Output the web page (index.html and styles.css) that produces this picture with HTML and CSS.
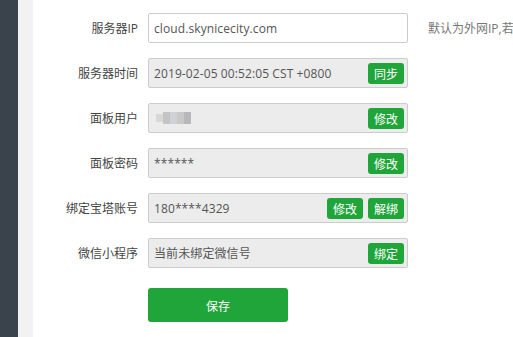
FILE: index.html
```html
<!DOCTYPE html>
<html lang="zh-CN">
<head>
<meta charset="utf-8">
<title>面板设置</title>
<link rel="stylesheet" href="styles.css">
</head>
<body>
<div class="page">
  <aside class="sidebar"></aside>
  <div class="gutter"></div>
  <main class="main">
    <div class="row">
      <span class="label">服务器IP</span>
      <div class="field field-white"><span class="value">cloud.skynicecity.com</span></div>
      <span class="hint">默认为外网IP,若</span>
    </div>
    <div class="row">
      <span class="label">服务器时间</span>
      <div class="field"><span class="value">2019-02-05 00:52:05 CST +0800</span><span class="btns"><button class="btn">同步</button></span></div>
    </div>
    <div class="row">
      <span class="label">面板用户</span>
      <div class="field"><span class="value"><span class="mosaic"><i class="m1"></i><i class="m2"></i><i class="m3"></i><i class="m4"></i><i class="m5"></i></span></span><span class="btns"><button class="btn">修改</button></span></div>
    </div>
    <div class="row">
      <span class="label">面板密码</span>
      <div class="field"><span class="value">******</span><span class="btns"><button class="btn">修改</button></span></div>
    </div>
    <div class="row">
      <span class="label">绑定宝塔账号</span>
      <div class="field"><span class="value">180****4329</span><span class="btns"><button class="btn">修改</button><button class="btn">解绑</button></span></div>
    </div>
    <div class="row">
      <span class="label">微信小程序</span>
      <div class="field"><span class="value">当前未绑定微信号</span><span class="btns"><button class="btn">绑定</button></span></div>
    </div>
    <div class="actions">
      <button class="save">保存</button>
    </div>
  </main>
</div>
</body>
</html>
```
FILE: styles.css
```css
html, body {
  margin: 0;
  padding: 0;
  height: 100%;
  background: #fff;
  font-family: "Open Sans", "Noto Sans CJK SC", sans-serif;
  font-size: 12px;
  color: #555;
  overflow: hidden;
}
.page {
  display: flex;
  height: 100%;
}
.sidebar {
  width: 18px;
  flex: none;
  background: #3a424b;
}
.gutter {
  width: 15px;
  flex: none;
  background: #f2f2f2;
}
.main {
  flex: 1;
  padding-top: 13px;
  white-space: nowrap;
  overflow: hidden;
}
.row {
  display: flex;
  align-items: center;
  height: 30px;
  margin-bottom: 15px;
}
.label {
  width: 105px;
  padding-right: 10px;
  text-align: right;
  flex: none;
  color: #444;
  font-size: 12px;
}
.field {
  box-sizing: border-box;
  width: 260px;
  height: 30px;
  flex: none;
  display: flex;
  align-items: center;
  justify-content: space-between;
  border: 1px solid #ccc;
  border-radius: 2px;
  background: #ececec;
  padding: 0 3px 0 5px;
}
.field-white {
  background: #fff;
}
.value {
  color: #555;
  font-size: 12px;
  letter-spacing: 0.1px;
  display: flex;
  align-items: center;
}
.btns {
  display: flex;
  gap: 5px;
}
.btn {
  height: 21px;
  width: 36px;
  padding: 0;
  border: none;
  border-radius: 3px;
  background: #20a53a;
  color: #fff;
  font-family: "Noto Sans CJK SC", sans-serif;
  font-size: 12px;
  line-height: 21px;
}
.hint {
  margin-left: 20px;
  color: #777;
  font-size: 12px;
}
.mosaic {
  display: flex;
  align-items: center;
  height: 14px;
  margin-left: 2px;
}
.mosaic i {
  display: block;
  width: 7px;
  height: 12px;
}
.m1 { background: #d8d8d8; height: 8px !important; }
.m2 { background: #c4c4c4; }
.m3 { background: #cdd2d6; }
.m4 { background: #c8c8c8; }
.m5 { background: #b8b8bc; }
.actions {
  padding-left: 115px;
  padding-top: 5px;
}
.save {
  width: 140px;
  height: 34px;
  border: none;
  border-radius: 3px;
  background: #20a53a;
  color: #fff;
  font-family: "Noto Sans CJK SC", sans-serif;
  font-size: 12px;
}
```
